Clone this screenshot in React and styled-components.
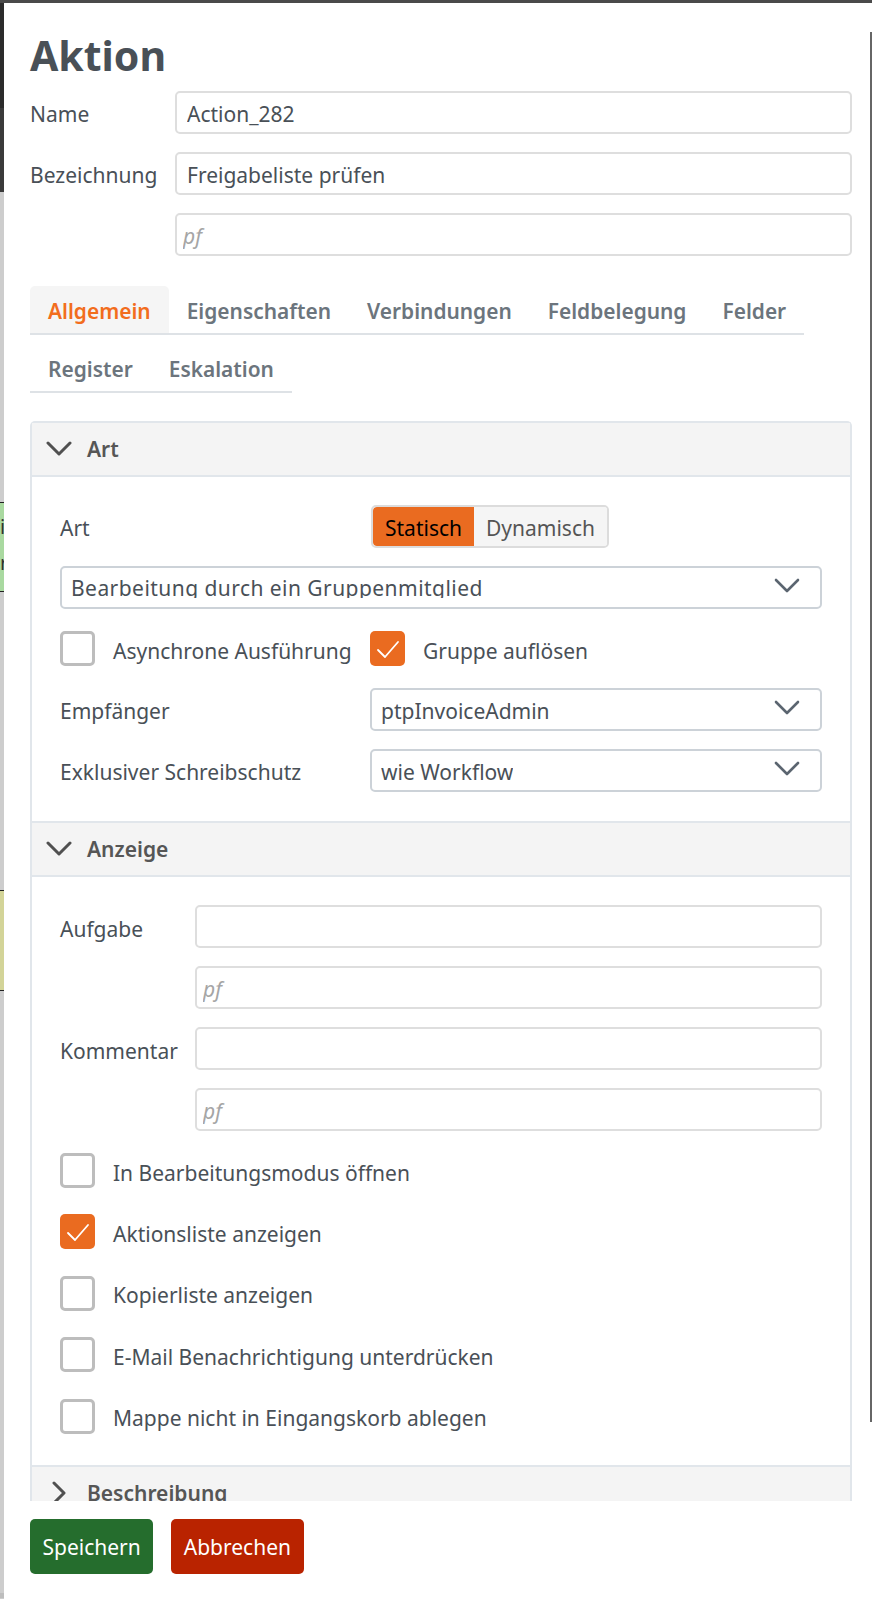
import React from 'react';
import styled, { createGlobalStyle } from 'styled-components';

const GlobalStyle = createGlobalStyle`
  * { box-sizing: border-box; }
  html, body { margin: 0; padding: 0; }
  body {
    font-family: "Noto Sans", "Open Sans", sans-serif;
    font-size: 21px;
    color: #495057;
    background: #cdcdcd;
  }
`;

const Screen = styled.div`
  position: relative;
  width: 872px;
  height: 1599px;
  overflow: hidden;
  display: flex;
  flex-direction: column;
`;

const TopBar = styled.div`
  height: 3px;
  flex: none;
  background: #4a4a4a;
`;

const Stage = styled.div`
  flex: 1;
  min-height: 0;
  display: flex;
`;

const Backdrop = styled.div`
  width: 4px;
  flex: none;
  display: flex;
  flex-direction: column;
  align-items: stretch;
  background: #cdcdcd;
`;

const BackdropBlock = styled.div`
  flex: none;
  height: ${(p) => p.$h}px;
  padding-top: ${(p) => (p.$line ? '6px' : '0')};
  overflow: hidden;
  font-size: 20px;
  line-height: 36px;
  color: #333;
  background: ${(p) => p.$bg || 'transparent'};
  border-top: ${(p) => (p.$line ? '1px solid #222' : 'none')};
  border-bottom: ${(p) => (p.$line ? '1px solid #222' : 'none')};
`;

const Drawer = styled.div`
  flex: 1;
  min-width: 0;
  display: flex;
  flex-direction: column;
  background: #fff;
`;

const Body = styled.div`
  flex: 1;
  min-height: 0;
  overflow: hidden;
  padding: 20px 20px 0 26px;
`;

const Title = styled.h1`
  margin: 0 0 7px;
  padding-top: 3px;
  font-size: 41px;
  line-height: 58px;
  font-weight: 700;
  color: #495057;
`;

const FieldGrid = styled.div`
  display: grid;
  grid-template-columns: ${(p) => p.$label}px 1fr;
  row-gap: 18px;
  align-items: center;
`;

const Label = styled.label`
  padding-top: ${(p) => p.$top || 3}px;
  color: #495057;
  line-height: 27px;
  white-space: nowrap;
`;

const TextInput = styled.input`
  grid-column: 2;
  width: 100%;
  height: 43px;
  padding: 3px 7px 0;
  border: 2px solid #dedede;
  border-radius: 5px;
  font: inherit;
  color: #495057;
  background: #fff;
  outline: none;
  padding-left: ${(p) => (p.value ? '10px' : '6px')};
  &::placeholder {
    font-style: italic;
    color: #a5a5a5;
    opacity: 1;
  }
`;

const Tabs = styled.div`
  display: flex;
  flex-wrap: wrap;
  row-gap: 9px;
  margin-top: 30px;
`;

const Tab = styled.div`
  height: 49px;
  padding: 12px 18px 0;
  font-size: 20.9px;
  font-weight: 600;
  line-height: 27px;
  white-space: nowrap;
  border-bottom: 2px solid #dee2e6;
  border-radius: 5px 5px 0 0;
  color: ${(p) => (p.$active ? '#f26d1d' : '#6c757d')};
  background: ${(p) => (p.$active ? '#f5f5f5' : 'transparent')};
`;

const Accordion = styled.div`
  margin-top: 28px;
  border: 2px solid #e1e6eb;
  border-bottom: none;
  border-radius: 5px 5px 0 0;
`;

const SectionHeader = styled.div`
  height: ${(p) => p.$h || 55}px;
  display: flex;
  align-items: center;
  padding-left: 14px;
  background: #f4f4f4;
  font-weight: 600;
  color: #565656;
  border-top: ${(p) => (p.$first ? 'none' : '2px solid #e1e6eb')};
  border-bottom: ${(p) => (p.$open ? '2px solid #e1e6eb' : 'none')};
`;

const HeaderIcon = styled.svg`
  width: 26px;
  height: 26px;
  flex: none;
  margin-right: 15px;
  fill: none;
  stroke: #505050;
  stroke-width: 3;
  stroke-linecap: round;
  stroke-linejoin: round;
`;

const SectionBody = styled.div`
  padding: 28px 28px ${(p) => p.$bottom}px;
  display: flex;
  flex-direction: column;
  gap: 18px;
`;

const ToggleGroup = styled.div`
  display: inline-flex;
  justify-self: start;
  height: 43px;
  border: 2px solid #dcdcdc;
  border-radius: 5px;
  overflow: hidden;
`;

const ToggleItem = styled.div`
  padding: 3px 12px 0;
  display: flex;
  align-items: center;
  border-radius: ${(p) => (p.$active ? '4px 0 0 4px' : '0')};
  color: ${(p) => (p.$active ? '#000' : '#555')};
  background: ${(p) => (p.$active ? '#ea6b20' : '#f5f5f5')};
`;

const SelectBox = styled.div`
  height: 43px;
  display: flex;
  align-items: flex-start;
  justify-content: space-between;
  padding: 0 20px 0 9px;
  border: 2px solid #ccd2d8;
  border-radius: 5px;
  background: #fff;
`;

// the first select cuts its descenders off in the original as well
const SelectText = styled.div`
  height: ${(p) => (p.$clipped ? 30 : 39)}px;
  line-height: ${(p) => (p.$clipped ? 40 : 42)}px;
  letter-spacing: ${(p) => (p.$clipped ? '0.45px' : '0')};
  overflow: hidden;
  white-space: nowrap;
`;

const SelectIcon = styled.svg`
  width: 26px;
  height: 26px;
  margin-top: 5px;
  fill: none;
  stroke: #5b6570;
  stroke-width: 2.6;
  stroke-linecap: round;
  stroke-linejoin: round;
`;

const CheckLine = styled.div`
  display: flex;
  align-items: center;
  gap: 18px;
  height: 35px;
`;

const CheckBox = styled.div`
  width: 35px;
  height: 35px;
  flex: none;
  display: flex;
  align-items: center;
  justify-content: center;
  border-radius: 5px;
  border: ${(p) => (p.$checked ? 'none' : '3px solid #bdbdbd')};
  background: ${(p) => (p.$checked ? '#ea6b20' : '#fff')};
`;

const CheckMark = styled.svg`
  width: 26px;
  height: 26px;
  fill: none;
  stroke: #fff;
  stroke-width: 1.8;
  stroke-linecap: round;
  stroke-linejoin: round;
`;

const CheckText = styled.span`
  padding-top: 4px;
  white-space: nowrap;
`;

const CheckPair = styled.div`
  display: grid;
  grid-template-columns: 310px 1fr;
  margin: 4px 0;
`;

const CheckList = styled.div`
  display: flex;
  flex-direction: column;
  gap: 26.4px;
  margin-top: 4px;
`;

const Footer = styled.div`
  flex: none;
  height: 98px;
  padding: 18px 26px 0;
  display: flex;
  gap: 18px;
  align-items: flex-start;
`;

const FooterButton = styled.button`
  height: 55px;
  padding: 1px 12.5px 0;
  border: none;
  border-radius: 5px;
  font: inherit;
  color: #fff;
  background: ${(p) => p.$bg};
`;

const ScrollThumb = styled.div`
  position: absolute;
  right: 0;
  top: 32px;
  width: 2px;
  height: 1390px;
  background: #666;
`;

const ChevronDown = ({ as: Icon = SelectIcon }) => (
  <Icon viewBox="0 0 26 26">
    <path d="M2 7 L13 18 L24 7" />
  </Icon>
);

const ChevronRight = () => (
  <HeaderIcon viewBox="0 0 26 26">
    <path d="M8 3 L18 13 L8 23" />
  </HeaderIcon>
);

const Check = ({ label, checked }) => (
  <CheckLine>
    <CheckBox $checked={checked}>
      {checked && (
        <CheckMark viewBox="0 0 26 26">
          <path d="M3 14 L10 21 L23 6" />
        </CheckMark>
      )}
    </CheckBox>
    <CheckText>{label}</CheckText>
  </CheckLine>
);

const tabs = ['Allgemein', 'Eigenschaften', 'Verbindungen', 'Feldbelegung', 'Felder', 'Register', 'Eskalation'];

const displayChecks = [
  ['In Bearbeitungsmodus öffnen', false],
  ['Aktionsliste anzeigen', true],
  ['Kopierliste anzeigen', false],
  ['E-Mail Benachrichtigung unterdrücken', false],
  ['Mappe nicht in Eingangskorb ablegen', false],
];

export default function App() {
  return (
    <Screen>
      <GlobalStyle />
      <TopBar />
      <Stage>
        <Backdrop>
          <BackdropBlock $h={105} $bg="#2b2b2b" />
          <BackdropBlock $h={84} $bg="#3a3a3a" />
          <BackdropBlock $h={310} />
          <BackdropBlock $h={90} $bg="#a9d9a0" $line>i<br />r</BackdropBlock>
          <BackdropBlock $h={298} />
          <BackdropBlock $h={101} $bg="#d3d498" $line />
          <BackdropBlock $h={602} />
          <BackdropBlock $h={5} $bg="#bdbdbd" />
        </Backdrop>
        <Drawer>
          <Body>
            <Title>Aktion</Title>
            <FieldGrid $label={145}>
              <Label>Name</Label>
              <TextInput readOnly value="Action_282" />
              <Label>Bezeichnung</Label>
              <TextInput readOnly value="Freigabeliste prüfen" />
              <TextInput readOnly placeholder="pf" />
            </FieldGrid>
            <Tabs>
              {tabs.map((t, i) => (
                <Tab key={t} $active={i === 0}>{t}</Tab>
              ))}
            </Tabs>
            <Accordion>
              <SectionHeader $first $open $h={54}>
                <ChevronDown as={HeaderIcon} />
                Art
              </SectionHeader>
              <SectionBody $bottom={29}>
                <FieldGrid $label={311}>
                  <Label>Art</Label>
                  <ToggleGroup>
                    <ToggleItem $active>Statisch</ToggleItem>
                    <ToggleItem>Dynamisch</ToggleItem>
                  </ToggleGroup>
                </FieldGrid>
                <SelectBox>
                  <SelectText $clipped>Bearbeitung durch ein Gruppenmitglied</SelectText>
                  <ChevronDown />
                </SelectBox>
                <CheckPair>
                  <Check label="Asynchrone Ausführung" />
                  <Check label="Gruppe auflösen" checked />
                </CheckPair>
                <FieldGrid $label={310}>
                  <Label>Empfänger</Label>
                  <SelectBox>
                    <SelectText>ptpInvoiceAdmin</SelectText>
                    <ChevronDown />
                  </SelectBox>
                  <Label>Exklusiver Schreibschutz</Label>
                  <SelectBox>
                    <SelectText>wie Workflow</SelectText>
                    <ChevronDown />
                  </SelectBox>
                </FieldGrid>
              </SectionBody>
              <SectionHeader $open $h={56}>
                <ChevronDown as={HeaderIcon} />
                Anzeige
              </SectionHeader>
              <SectionBody $bottom={31}>
                <FieldGrid $label={135}>
                  <Label $top={5}>Aufgabe</Label>
                  <TextInput readOnly />
                  <TextInput readOnly placeholder="pf" />
                  <Label $top={5}>Kommentar</Label>
                  <TextInput readOnly />
                  <TextInput readOnly placeholder="pf" />
                </FieldGrid>
                <CheckList>
                  {displayChecks.map(([label, checked]) => (
                    <Check key={label} label={label} checked={checked} />
                  ))}
                </CheckList>
              </SectionBody>
              <SectionHeader>
                <ChevronRight />
                Beschreibung
              </SectionHeader>
            </Accordion>
          </Body>
          <Footer>
            <FooterButton $bg="#256d2d">Speichern</FooterButton>
            <FooterButton $bg="#b92300">Abbrechen</FooterButton>
          </Footer>
        </Drawer>
      </Stage>
      <ScrollThumb />
    </Screen>
  );
}
